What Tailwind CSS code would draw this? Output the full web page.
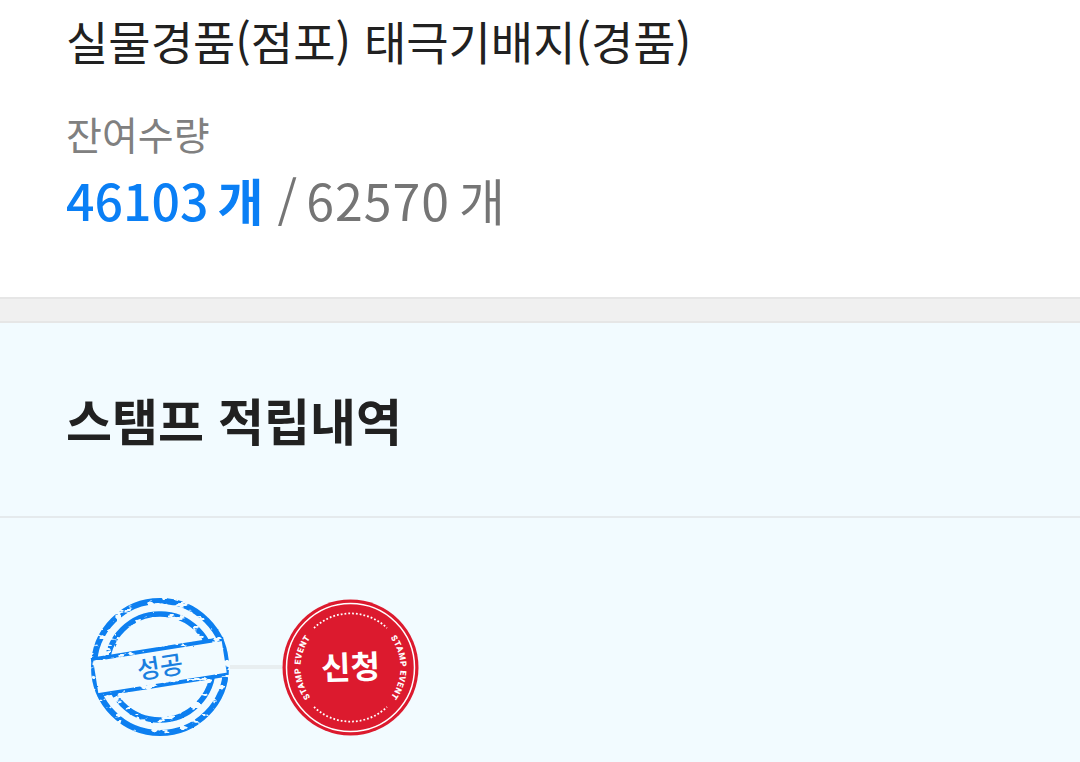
<!doctype html>
<html lang="ko"><head><meta charset="utf-8"><script src="https://cdn.jsdelivr.net/npm/@tailwindcss/browser@4"></script></head>
<body class="m-0 overflow-hidden bg-[#f2fbff]">
<div class="w-[1080px] h-[762px] overflow-hidden font-['Noto_Sans_CJK_KR',sans-serif]">
<section class="h-[297px] bg-white pl-[66px] pt-[12px]">
<h1 class="m-0 h-[56px] text-[46px] leading-[56px] font-normal text-[#212121] whitespace-nowrap">실물경품(점포) 태극기배지(경품)</h1>
<p class="m-0 mt-[41px] h-[48px] text-[39px] leading-[48px] text-[#808080]">잔여수량</p>
<p class="m-0 mt-[12px] h-[60px] text-[50px] leading-[60px] text-[#757575] whitespace-nowrap [word-spacing:-5px]"><span class="font-medium text-[#0a7ff5]">46103 <span class="font-bold">개</span></span> <span class="ml-[5px]">/</span> <span class="tracking-[1px]">62570</span> 개</p>
</section>
<div class="h-[26px] bg-[#f0f0f0] border-y-2 border-[#e6e6e6]"></div>
<section class="h-[195px] border-b-2 border-[#e5eaed] pl-[66px] pt-[65px]">
<h2 class="m-0 text-[50px] leading-[62px] font-bold text-[#212121] whitespace-nowrap">스탬프 적립내역</h2>
</section>
<div class="flex items-center pl-[90px] pt-[79px]">
<svg class="block w-[140px] h-[140px] shrink-0" viewBox="0 0 140 140">
<defs>
<filter id="rough" x="-5%" y="-5%" width="110%" height="110%">
<feTurbulence type="fractalNoise" baseFrequency="0.09 0.16" numOctaves="3" seed="7" result="n"/>
<feDisplacementMap in="SourceGraphic" in2="n" scale="2" result="d"/>
<feColorMatrix in="n" type="matrix" values="0 0 0 0 0 0 0 0 0 0 0 0 0 0 0 0 0 0 -14 9.200" result="holes"/>
<feComposite in="d" in2="holes" operator="in"/>
</filter>
</defs>
<g filter="url(#rough)">
<circle cx="70" cy="70" r="66" fill="none" stroke="#0a7ff0" stroke-width="6"/>
<circle cx="70" cy="70" r="53" fill="none" stroke="#0a7ff0" stroke-width="5.500"/>
<g transform="rotate(-9 70 70)">
<rect x="5" y="52" width="130" height="36" fill="#f2fbff"/>
<path d="M3 52H137M4 88H136" stroke="#0a7ff0" stroke-width="4"/>
</g>
</g>
<text x="70" y="79" text-anchor="middle" font-size="25" font-weight="500" fill="#1a7fdf" font-family="Noto Sans CJK KR" transform="rotate(-9 70 70)">성공</text>
</svg>
<div class="w-[52px] h-[4px] bg-[#e8eef0] shrink-0"></div>
<svg class="block w-[137px] h-[137px] shrink-0" viewBox="0 0 137 137">
<defs>
<path id="l" d="M30.200 100.600A50 50 0 0 1 30.200 36.400"/>
<path id="r" d="M106.800 36.400A50 50 0 0 1 106.800 100.600"/>
</defs>
<circle cx="68.500" cy="68.500" r="68" fill="#dc1a2e"/>
<circle cx="68.500" cy="68.500" r="64" fill="none" stroke="#fff" stroke-width="1.500"/>
<path d="M32 29A53 53 0 0 1 105 29M32 108A53 53 0 0 0 105 108" fill="none" stroke="#fff" stroke-width="1.800" stroke-dasharray="1.800 2"/>
<text font-size="8.500" font-weight="900" fill="#fff" letter-spacing="0.600" text-anchor="middle" font-family="Roboto"><textPath href="#l" startOffset="50%">STAMP EVENT</textPath></text>
<text font-size="8.500" font-weight="900" fill="#fff" letter-spacing="0.600" text-anchor="middle" font-family="Roboto"><textPath href="#r" startOffset="50%">STAMP EVENT</textPath></text>
<text x="68.500" y="80" text-anchor="middle" font-size="32" font-weight="700" fill="#fff" font-family="Noto Sans CJK KR" transform="rotate(-2 68.500 68.500)">신청</text>
</svg>
</div>
</div>
</body></html>
